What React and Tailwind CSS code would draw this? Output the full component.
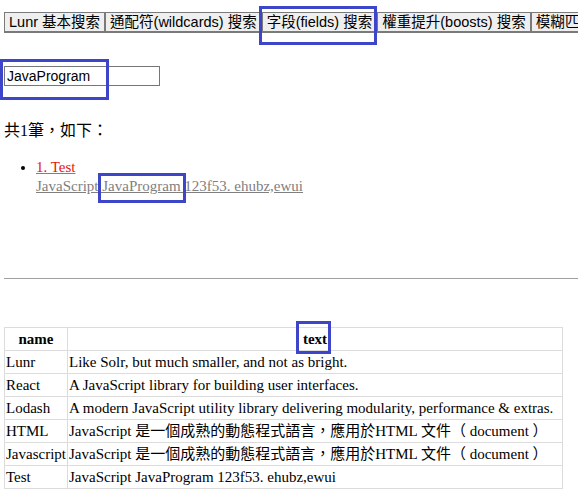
import React from "react";

const tabs = [
  "Lunr 基本搜索",
  "通配符(wildcards) 搜索",
  "字段(fields) 搜索",
  "權重提升(boosts) 搜索",
  "模糊匹配(fuzzy) 搜索",
];

const rows = [
  ["Lunr", "Like Solr, but much smaller, and not as bright."],
  ["React", "A JavaScript library for building user interfaces."],
  ["Lodash", "A modern JavaScript utility library delivering modularity, performance & extras."],
  ["HTML", "JavaScript 是一個成熟的動態程式語言，應用於HTML 文件（ document ）"],
  ["Javascript", "JavaScript 是一個成熟的動態程式語言，應用於HTML 文件（ document ）"],
  ["Test", "JavaScript JavaProgram 123f53. ehubz,ewui"],
];

const sans = "font-['Liberation_Sans','Noto_Sans_CJK_TC',sans-serif]";
const serif = "font-['Liberation_Serif','Noto_Sans_CJK_TC',serif]";

// annotation boxes drawn over the screenshot
const Mark = ({ className }) => (
  <div className={"absolute border-[3px] border-[#3d45c9] pointer-events-none " + className} />
);

const App = () => {
  return (
    <div className={"relative w-[578px] h-[497px] overflow-hidden bg-white text-black " + serif}>
      <div className="px-[4px] pt-[12px]">
        <div className="flex whitespace-nowrap">
          {tabs.map((t) => (
            <button
              key={t}
              className={
                "h-[21px] shrink-0 px-[4px] bg-[#efefef] border border-[#7a7a7a] border-b-2 text-[14.5px] leading-[17px] " +
                sans
              }
            >
              {t}
            </button>
          ))}
        </div>

        <input
          defaultValue="JavaProgram"
          className={
            "mt-[33px] block w-[156px] h-[20px] px-[2px] border border-[#767676] text-[14px] leading-[18px] outline-none " +
            sans
          }
        />

        <p className="mt-[36px] text-[16px] leading-[18px]">共1筆，如下：</p>

        <ul className="list-disc pl-[32px] mt-[18px] text-[15px] leading-[19px]">
          <li>
            <a className="text-[#e8160c] underline decoration-[#808080]">1. Test</a>
            <br />
            <a className="text-[#808080] underline">JavaScript JavaProgram 123f53. ehubz,ewui</a>
          </li>
        </ul>

        <hr className="mt-[82px] border-t border-[#a0a0a0] w-[600px]" />

        <table className="mt-[48px] w-[559px] border-collapse text-[15px] leading-[18px]">
          <thead>
            <tr className="h-[23px]">
              <th className="w-[63px] border border-[#dcdcdc] font-bold text-center">name</th>
              <th className="border border-[#dcdcdc] font-bold text-center">text</th>
            </tr>
          </thead>
          <tbody>
            {rows.map(([n, t]) => (
              <tr key={n} className="h-[23px]">
                <td className="border border-[#dcdcdc] px-[1px] whitespace-nowrap">{n}</td>
                <td className="border border-[#dcdcdc] px-[1px] whitespace-nowrap">{t}</td>
              </tr>
            ))}
          </tbody>
        </table>
      </div>

      <Mark className="left-[259px] top-[6px] w-[118px] h-[39px]" />
      <Mark className="left-0 top-[59px] w-[109px] h-[41px]" />
      <Mark className="left-[98px] top-[173px] w-[88px] h-[30px]" />
      <Mark className="left-[296px] top-[321px] w-[35px] h-[33px]" />
    </div>
  );
};

export default App;
